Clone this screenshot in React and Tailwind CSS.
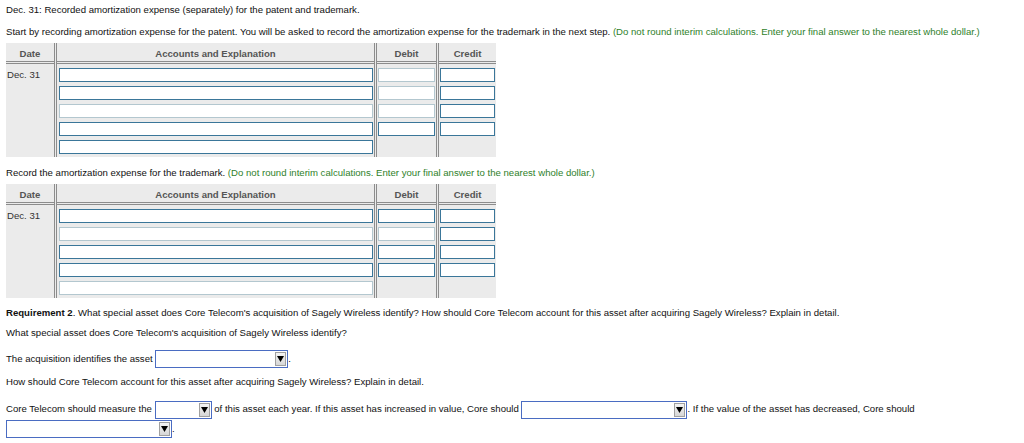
import React from "react";

const DARK = "border-[#3a7699]";
const LIGHT = "border-[#b3c7cf]";

const Input = ({ light }) => (
  <div className={`h-[14px] w-full bg-white border ${light ? LIGHT : DARK}`} />
);

// one journal table; shade says which inputs have the light border
const Journal = ({ shade }) => {
  const rows = [0, 1, 2, 3, 4];
  return (
    <div className="flex w-[490px] bg-[#ebebeb]">
      {/* Date */}
      <div className="w-[51px] border-r-[3px] border-double border-[#8c8c8c]">
        <div className="h-[21px] pt-[3px] border-b-[3px] border-double border-[#8c8c8c] flex items-center justify-center font-bold text-[#555]">
          Date
        </div>
        <div className="pt-[2px] pb-[1px]">
          <div className="h-[18px] flex items-center pl-[1px] text-[#333]">Dec. 31</div>
          <div className="h-[72px]" />
        </div>
      </div>

      {/* Accounts */}
      <div className="w-[320px] border-r-[3px] border-double border-[#8c8c8c]">
        <div className="h-[21px] pt-[3px] border-b-[3px] border-double border-[#8c8c8c] flex items-center justify-center font-bold text-[#555]">
          Accounts and Explanation
        </div>
        <div className="pt-[2px] pb-[1px] pl-[2px] pr-[1px]">
          {rows.map((r) => (
            <div key={r} className="h-[18px] flex items-center">
              <Input light={shade.a[r]} />
            </div>
          ))}
        </div>
      </div>

      {/* Debit */}
      <div className="w-[62px] border-r-[3px] border-double border-[#8c8c8c]">
        <div className="h-[21px] pt-[3px] border-b-[3px] border-double border-[#8c8c8c] flex items-center justify-center font-bold text-[#555]">
          Debit
        </div>
        <div className="pt-[2px] pb-[1px] px-[1px]">
          {rows.slice(0, 4).map((r) => (
            <div key={r} className="h-[18px] flex items-center">
              <Input light={shade.d[r]} />
            </div>
          ))}
        </div>
      </div>

      {/* Credit */}
      <div className="w-[57px]">
        <div className="h-[21px] pt-[3px] border-b-[3px] border-double border-[#8c8c8c] flex items-center justify-center font-bold text-[#555]">
          Credit
        </div>
        <div className="pt-[2px] pb-[1px] px-[1px]">
          {rows.slice(0, 4).map((r) => (
            <div key={r} className="h-[18px] flex items-center">
              <Input light={shade.c[r]} />
            </div>
          ))}
        </div>
      </div>
    </div>
  );
};

const Select = ({ w }) => (
  <span
    className={`inline-flex align-middle h-[18px] ${w} border border-[#4a6cc2] bg-white items-center justify-end pr-[1px]`}
  >
    <span className="h-[14px] w-[11px] border border-[#a0a0a0] bg-gradient-to-b from-[#f4f4f4] to-[#d6d6d6] flex items-center justify-center">
      <svg width="7" height="6" viewBox="0 0 7 6">
        <path d="M0 0 H7 L3.5 6 Z" fill="#000" />
      </svg>
    </span>
  </span>
);

const Green = ({ children }) => <span className="text-[#2f7f2a]">{children}</span>;

const App = () => {
  return (
    <div
      className="bg-white w-[1024px] h-[443px] overflow-hidden px-[6px] pt-[4px] text-[9.6px] text-[#111] leading-[12px]"
      style={{ fontFamily: '"Liberation Sans", Arial, sans-serif' }}
    >
      <p>Dec. 31: Recorded amortization expense (separately) for the patent and trademark.</p>

      <p className="mt-[10px]">
        Start by recording amortization expense for the patent. You will be asked to record the
        amortization expense for the trademark in the next step.{" "}
        <Green>(Do not round interim calculations. Enter your final answer to the nearest whole dollar.)</Green>
      </p>

      <div className="mt-[5px]">
        <Journal
          shade={{
            a: [false, false, true, false, false],
            d: [true, true, true, false],
            c: [false, false, false, false],
          }}
        />
      </div>

      <p className="mt-[10px]">
        Record the amortization expense for the trademark.{" "}
        <Green>(Do not round interim calculations. Enter your final answer to the nearest whole dollar.)</Green>
      </p>

      <div className="mt-[5px]">
        <Journal
          shade={{
            a: [false, true, false, false, true],
            d: [false, true, false, false],
            c: [false, false, false, false],
          }}
        />
      </div>

      <p className="mt-[9px]">
        <span className="font-bold">Requirement 2</span>. What special asset does Core Telecom's
        acquisition of Sagely Wireless identify? How should Core Telecom account for this asset after
        acquiring Sagely Wireless? Explain in detail.
      </p>

      <p className="mt-[8px]">What special asset does Core Telecom's acquisition of Sagely Wireless identify?</p>

      <p className="mt-[11px] leading-[18px]">
        The acquisition identifies the asset <Select w="w-[133px]" />.
      </p>

      <p className="mt-[8px]">How should Core Telecom account for this asset after acquiring Sagely Wireless? Explain in detail.</p>

      <p className="mt-[11px] leading-[19px]">
        Core Telecom should measure the <Select w="w-[57px]" /> of this asset each year. If this asset
        has increased in value, Core should <Select w="w-[166px]" />. If the value of the asset has
        decreased, Core should <Select w="w-[166px]" />.
      </p>
    </div>
  );
};

export default App;
